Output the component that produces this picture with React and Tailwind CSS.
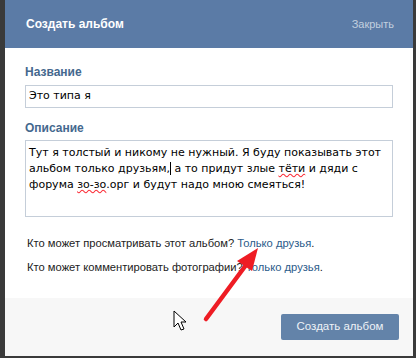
export default function App() {
  return (
    <div className="relative h-[358px] w-[416px] bg-[#3a3a3a] pl-[5px] pr-[3px] pb-[2px]">
      <div className="flex h-full flex-col bg-white" style={{ fontFamily: "'Liberation Sans', Arial, sans-serif" }}>
        <div className="flex h-[48px] shrink-0 items-center justify-between bg-[#5b7ba6] pl-[21px] pr-[19px]">
          <span className="text-[12px] font-bold text-white">Создать альбом</span>
          <span className="text-[11px] text-[#c2cfdf]">Закрыть</span>
        </div>

        <div className="flex flex-1 flex-col px-[20px] pt-[16px]">
          <div className="mb-[5px] text-[12px] font-bold leading-4 text-[#45688e]">Название</div>
          <div
            className="flex h-[23px] items-center border border-[#c5ced9] px-[3px] text-[11px] text-black"
            style={{ fontFamily: "'DejaVu Sans', Verdana, sans-serif" }}
          >
            Это типа я
          </div>

          <div className="mt-[12px] mb-[4px] text-[12px] font-bold leading-4 text-[#45688e]">Описание</div>
          <div
            className="h-[77px] border border-[#c5ced9] px-[3px] pt-[4px] text-[11px] leading-4 text-black"
            style={{ fontFamily: "'DejaVu Sans', Verdana, sans-serif" }}
          >
            Тут я толстый и никому не нужный. Я буду показывать этот альбом только друзьям,
            <span className="border-l border-black" /> а то придут злые{" "}
            <span className="underline decoration-red-500 decoration-wavy">тёти</span> и дяди с форума{" "}
            <span className="underline decoration-red-500 decoration-wavy">зо-зо</span>.орг и будут надо мною смеяться!
          </div>

          <div className="mt-[18px] pl-[2px] text-[11.2px] leading-4 text-[#222]">
            Кто может просматривать этот альбом? <span className="text-[#2b5b8a]">Только друзья</span>.
          </div>
          <div className="mt-[8px] pl-[2px] text-[11.2px] leading-4 text-[#222]">
            Кто может комментировать фотографии? <span className="text-[#2b5b8a]">Только друзья</span>.
          </div>
        </div>

        <div className="flex h-[58px] shrink-0 justify-end bg-[#f7f7f7] pr-[14px] pt-[16px]">
          <button className="h-[26px] w-[118px] rounded-[2px] bg-[#6383a9] text-[11.5px] text-[#eef2f7]">
            Создать альбом
          </button>
        </div>
      </div>

      <svg className="pointer-events-none absolute left-0 top-0" width="416" height="358" viewBox="0 0 416 358">
        <line x1="206" y1="319" x2="246" y2="265" stroke="#ee1c24" strokeWidth="4.5" strokeLinecap="round" />
        <polygon points="258,248 252,271 237,261" fill="#ee1c24" />
        <path
          d="M174 311 L174 327 L178 323 L181 330 L184 329 L181 322 L186 322 Z"
          fill="#fff"
          stroke="#000"
          strokeWidth="1"
          strokeLinejoin="round"
        />
      </svg>
    </div>
  );
}
